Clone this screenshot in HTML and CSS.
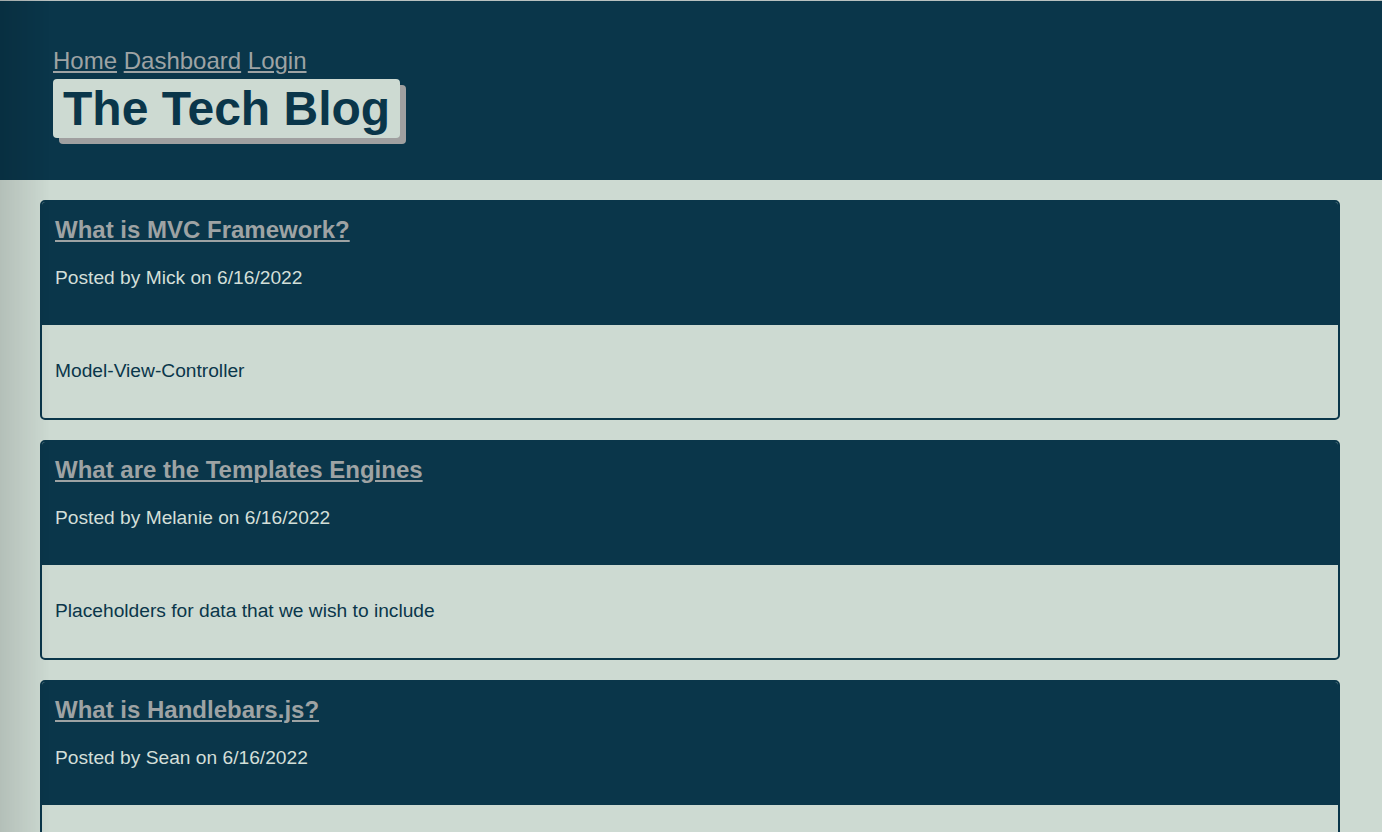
FILE: index.html
```html
<!DOCTYPE html>
<html lang="en">
<head>
<meta charset="utf-8">
<title>The Tech Blog</title>
<link rel="stylesheet" href="styles.css">
</head>
<body>
<header class="site-header">
  <nav class="nav">
    <a href="#">Home</a>
    <a href="#">Dashboard</a>
    <a href="#">Login</a>
  </nav>
  <h1 class="brand">The Tech Blog</h1>
</header>
<main class="posts">
  <article class="card">
    <div class="card-header">
      <h2 class="card-title"><a href="#">What is MVC Framework?</a></h2>
      <p class="card-meta">Posted by Mick on 6/16/2022</p>
    </div>
    <div class="card-body">
      <p>Model-View-Controller</p>
    </div>
  </article>
  <article class="card">
    <div class="card-header">
      <h2 class="card-title"><a href="#">What are the Templates Engines</a></h2>
      <p class="card-meta">Posted by Melanie on 6/16/2022</p>
    </div>
    <div class="card-body">
      <p>Placeholders for data that we wish to include</p>
    </div>
  </article>
  <article class="card">
    <div class="card-header">
      <h2 class="card-title"><a href="#">What is Handlebars.js?</a></h2>
      <p class="card-meta">Posted by Sean on 6/16/2022</p>
    </div>
    <div class="card-body">
      <p>A templating language that lets you keep HTML clean</p>
    </div>
  </article>
</main>
<div class="edge-shade"></div>
</body>
</html>
```
FILE: styles.css
```css
html, body {
  margin: 0;
  padding: 0;
}

body {
  background: #cddad2;
  font-family: "Liberation Sans", Arial, sans-serif;
  color: #0a364a;
}

.site-header {
  background: #0a364a;
  border-top: 1px solid #b9c1c0;
  padding: 46px 53px 42px;
}

.nav {
  font-size: 24px;
  line-height: 27px;
}

.nav a {
  color: #9ea3a4;
  text-decoration: underline;
}

.brand {
  display: inline-block;
  margin: 5px 0 0;
  padding: 3px 10px 2px;
  font-size: 48px;
  line-height: 54px;
  font-weight: bold;
  color: #0a364a;
  background: #cddad2;
  border-radius: 4px;
  box-shadow: 6px 6px 0 #a0a0a0;
}

.posts {
  display: flex;
  flex-direction: column;
  gap: 20px;
  padding: 20px 42px 20px 40px;
}

.card {
  border: 2px solid #0a364a;
  border-radius: 5px;
  overflow: hidden;
  height: 216px;
}

.card-header {
  background: #0a364a;
  padding: 14px 13px 36px;
}

.card-title {
  margin: 0;
  font-size: 24px;
  line-height: 27px;
  font-weight: bold;
}

.card-title a {
  color: #9ea3a4;
  text-decoration: underline;
}

.card-meta {
  margin: 24px 0 0;
  font-size: 19.2px;
  line-height: 22px;
  color: #d3dfd8;
}

.card-body {
  padding: 35px 13px 36px;
  font-size: 19.2px;
  line-height: 22px;
  color: #0a364a;
}

.card-body p {
  margin: 0;
}

.edge-shade {
  position: fixed;
  top: 0;
  left: 0;
  bottom: 0;
  width: 50px;
  pointer-events: none;
  background: linear-gradient(to right, rgba(0, 0, 0, 0.12), rgba(0, 0, 0, 0));
}
```
